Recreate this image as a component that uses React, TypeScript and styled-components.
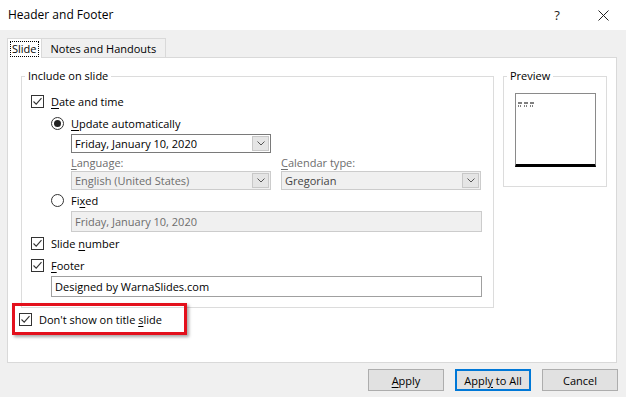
import React, { ReactNode } from 'react'
import styled, { createGlobalStyle } from 'styled-components'

const GlobalStyle = createGlobalStyle`
  html, body {
    margin: 0;
    padding: 0;
    background: #f0f0f0;
  }
  body {
    font-family: "Open Sans", "Noto Sans", "Liberation Sans", sans-serif;
    font-size: 11px;
    color: #000;
  }
`

const Dialog = styled.div`
  width: 626px;
  height: 397px;
  display: flex;
  flex-direction: column;
  background: #f0f0f0;
  overflow: hidden;
`

const TitleBar = styled.div`
  height: 30px;
  background: #fff;
  display: flex;
  align-items: center;
  padding: 0 0 0 8px;
  font-size: 12px;
`

const Title = styled.div`
  flex: 1;
  margin-top: -2px;
`

const TitleButton = styled.div`
  width: 46px;
  height: 30px;
  display: flex;
  align-items: center;
  justify-content: center;
  font-size: 13px;
  color: #222;
`

const TabStrip = styled.div`
  display: flex;
  margin: 8px 0 0 7px;
  height: 19px;
  position: relative;
  z-index: 1;
`

const Tab = styled.div<{ $active?: boolean }>`
  height: ${(p) => (p.$active ? '20px' : '19px')};
  padding: 0 ${(p) => (p.$active ? '3px' : '9px')};
  margin-left: ${(p) => (p.$active ? '0' : '-1px')};
  border: 1px solid #d9d9d9;
  border-bottom: none;
  background: ${(p) => (p.$active ? '#fff' : '#f0f0f0')};
  display: flex;
  align-items: center;
  box-sizing: border-box;
`

const FocusText = styled.span`
  outline: 1px dotted #000;
  padding: 0 1px;
  line-height: 14px;
`

const Panel = styled.div`
  margin: 0 9px 0 7px;
  height: 306px;
  box-sizing: border-box;
  border: 1px solid #d9d9d9;
  background: #fff;
  padding: 10px 0 0 13px;
`

const GroupRow = styled.div`
  display: flex;
  align-items: flex-start;
  gap: 9px;
`

const Group = styled.fieldset<{ $w: number; $h: number }>`
  margin: 0;
  padding: 0;
  width: ${(p) => p.$w}px;
  height: ${(p) => p.$h}px;
  box-sizing: border-box;
  border: 1px solid #dcdcdc;
  min-width: 0;
`

const Legend = styled.legend`
  margin-left: 3px;
  padding: 0 3px;
  line-height: 16px;
  height: 16px;
`

const GroupBody = styled.div`
  padding: 6px 10px 0 9px;
  display: flex;
  flex-direction: column;
`

const Row = styled.div<{ $indent?: number; $h?: number }>`
  display: flex;
  align-items: center;
  height: ${(p) => p.$h ?? 22}px;
  padding-left: ${(p) => p.$indent ?? 0}px;
  gap: 7px;
`

const FieldRow = styled.div<{ $indent?: number; $gap?: number }>`
  display: flex;
  padding-left: ${(p) => p.$indent ?? 0}px;
  gap: ${(p) => p.$gap ?? 10}px;
`

const Box = styled.span`
  width: 13px;
  height: 13px;
  box-sizing: border-box;
  border: 1px solid #333;
  background: #fff;
  display: inline-flex;
  flex: none;
`

const Round = styled.span`
  width: 13px;
  height: 13px;
  box-sizing: border-box;
  border: 1px solid #333;
  border-radius: 50%;
  background: #fff;
  display: inline-flex;
  align-items: center;
  justify-content: center;
  flex: none;
`

const Dot = styled.span`
  width: 7px;
  height: 7px;
  border-radius: 50%;
  background: #222;
`

const Key = styled.u`
  text-decoration: underline;
  text-underline-offset: 2px;
`

const Label = styled.span<{ $muted?: boolean }>`
  color: ${(p) => (p.$muted ? '#6d6d6d' : '#000')};
  white-space: nowrap;
`

const Select = styled.div<{ $disabled?: boolean; $w: number }>`
  width: ${(p) => p.$w}px;
  height: 19px;
  box-sizing: border-box;
  border: 1px solid ${(p) => (p.$disabled ? '#cccccc' : '#7a7a7a')};
  background: ${(p) => (p.$disabled ? '#f0f0f0' : '#fff')};
  display: flex;
  align-items: center;
  padding: 0 1px 0 3px;
`

const SelectText = styled.span<{ $tone: string }>`
  flex: 1;
  color: ${(p) => p.$tone};
  white-space: nowrap;
`

const Arrow = styled.span`
  width: 17px;
  height: 15px;
  box-sizing: border-box;
  background: #e5e5e5;
  border: 1px solid #c8c8c8;
  display: flex;
  align-items: center;
  justify-content: center;
`

const TextBox = styled.div<{ $disabled?: boolean; $w: number }>`
  width: ${(p) => p.$w}px;
  height: 21px;
  box-sizing: border-box;
  border: 1px solid ${(p) => (p.$disabled ? '#cccccc' : '#a0a0a0')};
  background: ${(p) => (p.$disabled ? '#f0f0f0' : '#fff')};
  color: ${(p) => (p.$disabled ? '#6d6d6d' : '#000')};
  display: flex;
  align-items: center;
  padding-left: 3px;
`

const SubLabels = styled.div`
  display: flex;
  height: 18px;
  align-items: center;
  padding-left: 40px;
`

const SubLabel = styled.span<{ $w: number }>`
  width: ${(p) => p.$w}px;
  color: #6d6d6d;
`

const TitleSlideRow = styled.div`
  position: relative;
  display: inline-flex;
  align-items: center;
  gap: 7px;
  height: 18px;
  margin: 2px 0 0 -2px;
`

const Highlight = styled.div`
  position: absolute;
  left: -7px;
  top: -7px;
  width: 175px;
  height: 32px;
  box-sizing: border-box;
  border: 3px solid #e3101c;
  box-shadow: 2px 2px 3px rgba(0, 0, 0, 0.35);
  pointer-events: none;
`

const PreviewBody = styled.div`
  padding: 9px 0 0 11px;
`

const PreviewPage = styled.div`
  width: 81px;
  height: 74px;
  box-sizing: border-box;
  border: 1px solid #8a8a8a;
  border-bottom: 3px solid #000;
  padding: 2px 0 0 1px;
`

const ButtonBar = styled.div`
  display: flex;
  justify-content: flex-end;
  gap: 11px;
  padding: 6px 8px 0 0;
`

const Button = styled.div<{ $default?: boolean }>`
  width: 76px;
  height: 22px;
  box-sizing: border-box;
  border: ${(p) => (p.$default ? '2px solid #0078d7' : '1px solid #adadad')};
  background: #e1e1e1;
  display: flex;
  align-items: center;
  justify-content: center;
`

const Check = () => (
  <Box>
    <svg width="11" height="11" viewBox="0 0 11 11">
      <path d="M1.5 5.5 L4.2 8.2 L9.5 2.2" fill="none" stroke="#333" strokeWidth="1.1" />
    </svg>
  </Box>
)

const Radio = ({ on }: { on?: boolean }) => <Round>{on && <Dot />}</Round>

const Chevron = () => (
  <svg width="8" height="5" viewBox="0 0 8 5">
    <path d="M0.5 0.5 L4 4 L7.5 0.5" fill="none" stroke="#555" strokeWidth="1" />
  </svg>
)

const Dropdown = ({ w, value, disabled, tone }: { w: number; value: string; disabled?: boolean; tone: string }) => (
  <Select $w={w} $disabled={disabled}>
    <SelectText $tone={tone}>{value}</SelectText>
    <Arrow>
      <Chevron />
    </Arrow>
  </Select>
)

const CheckRow = ({ children, indent }: { children: ReactNode; indent?: number }) => (
  <Row $indent={indent}>
    <Check />
    <Label>{children}</Label>
  </Row>
)

const App: React.FC = () => {
  return (
    <Dialog>
      <GlobalStyle />
      <TitleBar>
        <Title>Header and Footer</Title>
        <TitleButton>?</TitleButton>
        <TitleButton>
          <svg width="11" height="11" viewBox="0 0 11 11">
            <path d="M0.5 0.5 L10.5 10.5 M10.5 0.5 L0.5 10.5" stroke="#222" strokeWidth="1" />
          </svg>
        </TitleButton>
      </TitleBar>

      <TabStrip>
        <Tab $active>
          <FocusText>Slide</FocusText>
        </Tab>
        <Tab>Notes and Handouts</Tab>
      </TabStrip>

      <Panel>
        <GroupRow>
          <Group $w={473} $h={240}>
            <Legend>Include on slide</Legend>
            <GroupBody>
              <CheckRow>
                <Key>D</Key>ate and time
              </CheckRow>
              <Row $indent={20}>
                <Radio on />
                <Label>
                  <Key>U</Key>pdate automatically
                </Label>
              </Row>
              <FieldRow $indent={40}>
                <Dropdown w={200} value="Friday, January 10, 2020" tone="#000" />
              </FieldRow>
              <SubLabels>
                <SubLabel $w={210}>
                  <Key>L</Key>anguage:
                </SubLabel>
                <SubLabel $w={150}>
                  <Key>C</Key>alendar type:
                </SubLabel>
              </SubLabels>
              <FieldRow $indent={40}>
                <Dropdown w={200} value="English (United States)" disabled tone="#6d6d6d" />
                <Dropdown w={200} value="Gregorian" disabled tone="#444" />
              </FieldRow>
              <Row $indent={20} $h={21}>
                <Radio />
                <Label>
                  Fi<Key>x</Key>ed
                </Label>
              </Row>
              <FieldRow $indent={40}>
                <TextBox $w={411} $disabled>
                  Friday, January 10, 2020
                </TextBox>
              </FieldRow>
              <CheckRow>
                Slide <Key>n</Key>umber
              </CheckRow>
              <CheckRow>
                <Key>F</Key>ooter
              </CheckRow>
              <FieldRow $indent={20}>
                <TextBox $w={431}>Designed by WarnaSlides.com</TextBox>
              </FieldRow>
            </GroupBody>
          </Group>

          <Group $w={104} $h={119}>
            <Legend>Preview</Legend>
            <PreviewBody>
              <PreviewPage>
                <svg width="18" height="6" viewBox="0 0 18 6">
                  <path d="M1 1 H5 M7 1 H11 M13 1 H17" stroke="#000" strokeWidth="1" />
                  <path d="M1 4 H4 M7 4 H10 M13 4 H16" stroke="#000" strokeWidth="1" strokeDasharray="1 1" />
                </svg>
              </PreviewPage>
            </PreviewBody>
          </Group>
        </GroupRow>

        <TitleSlideRow>
          <Check />
          <Label>
            Don&apos;t show on title <Key>s</Key>lide
          </Label>
          <Highlight />
        </TitleSlideRow>
      </Panel>

      <ButtonBar>
        <Button>
          <span>
            <Key>A</Key>pply
          </span>
        </Button>
        <Button $default>
          <span>
            Appl<Key>y</Key> to All
          </span>
        </Button>
        <Button>Cancel</Button>
      </ButtonBar>
    </Dialog>
  )
}

export default App
